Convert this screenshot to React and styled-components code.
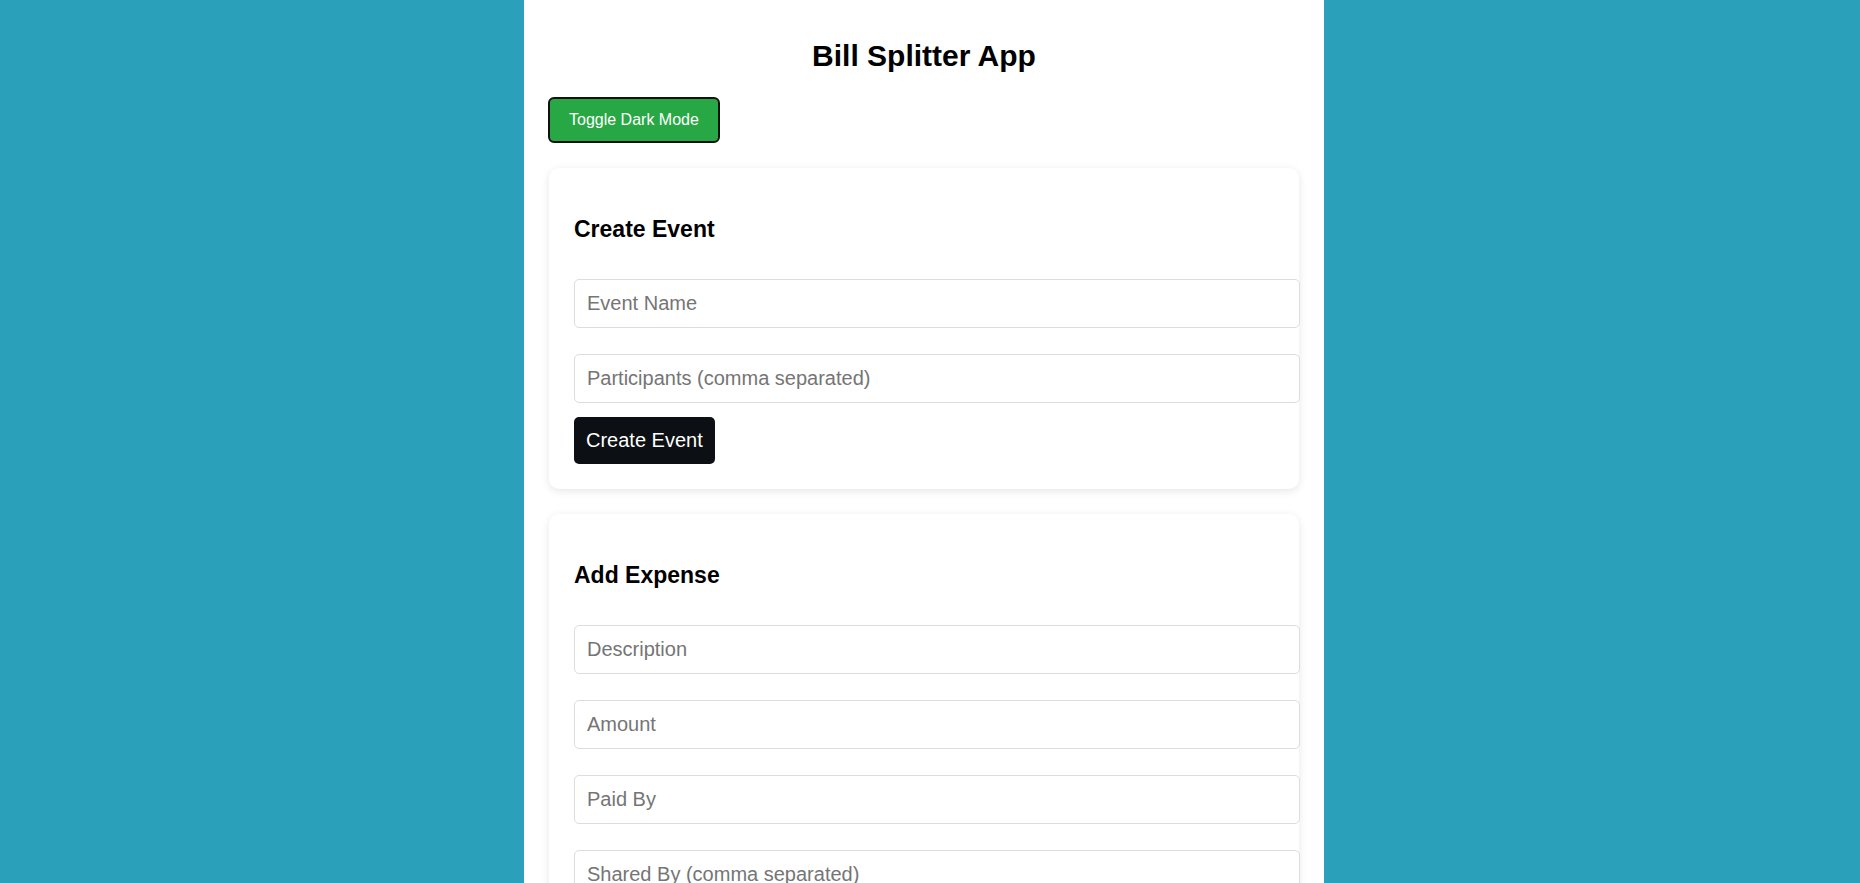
import React from "react";
import styled, { createGlobalStyle } from "styled-components";

const GlobalStyle = createGlobalStyle`
  html, body {
    margin: 0;
    padding: 0;
  }
  body {
    background: #2aa0bb;
    font-family: "Liberation Sans", Arial, sans-serif;
    color: #000;
    padding-right: 12px;
  }
`;

const Page = styled.div`
  width: 800px;
  min-height: 100vh;
  margin: 0 auto;
  box-sizing: border-box;
  padding: 39px 25px 25px;
  background: #ffffff;
  display: flex;
  flex-direction: column;
  align-items: flex-start;
`;

const Title = styled.h1`
  align-self: stretch;
  margin: 0 0 24px;
  font-size: 30px;
  line-height: 34px;
  font-weight: 700;
  text-align: center;
`;

const ToggleButton = styled.button`
  font-family: "Liberation Sans", Arial, sans-serif;
  font-size: 16px;
  line-height: 18px;
  padding: 12px 19px;
  background: #28a745;
  color: #ffffff;
  border: 2px solid #111111;
  border-radius: 6px;
  margin: 0 0 25px -1px;
  cursor: pointer;
`;

const Card = styled.section`
  align-self: stretch;
  background: #ffffff;
  border-radius: 10px;
  box-shadow: 0 2px 8px rgba(0, 0, 0, 0.1);
  padding: 26px 25px 25px;
  margin-bottom: 25px;
  display: flex;
  flex-direction: column;
  align-items: flex-start;
`;

const CardTitle = styled.h2`
  margin: 22px 0 36px;
  font-size: 23px;
  line-height: 27px;
  font-weight: 700;
`;

const Input = styled.input`
  display: block;
  width: 100%;
  box-sizing: content-box;
  padding: 12px;
  margin: 0 0 ${(p) => (p.$last ? "14px" : "26px")};
  font-family: "Liberation Sans", Arial, sans-serif;
  font-size: 20px;
  line-height: 23px;
  color: #222;
  border: 1px solid #dddddd;
  border-radius: 5px;
  background: #fff;
  outline: none;
  &::placeholder {
    color: #757575;
  }
`;

const DarkButton = styled.button`
  font-family: "Liberation Sans", Arial, sans-serif;
  font-size: 20px;
  line-height: 23px;
  padding: 12px 12px;
  background: #0c1014;
  color: #ffffff;
  border: none;
  border-radius: 5px;
  cursor: pointer;
`;

export default function App() {
  return (
    <>
      <GlobalStyle />
      <Page>
        <Title>Bill Splitter App</Title>
        <ToggleButton>Toggle Dark Mode</ToggleButton>
        <Card>
          <CardTitle>Create Event</CardTitle>
          <Input placeholder="Event Name" />
          <Input placeholder="Participants (comma separated)" $last />
          <DarkButton>Create Event</DarkButton>
        </Card>
        <Card>
          <CardTitle>Add Expense</CardTitle>
          <Input placeholder="Description" />
          <Input placeholder="Amount" />
          <Input placeholder="Paid By" />
          <Input placeholder="Shared By (comma separated)" $last />
          <DarkButton>Add Expense</DarkButton>
        </Card>
      </Page>
    </>
  );
}
